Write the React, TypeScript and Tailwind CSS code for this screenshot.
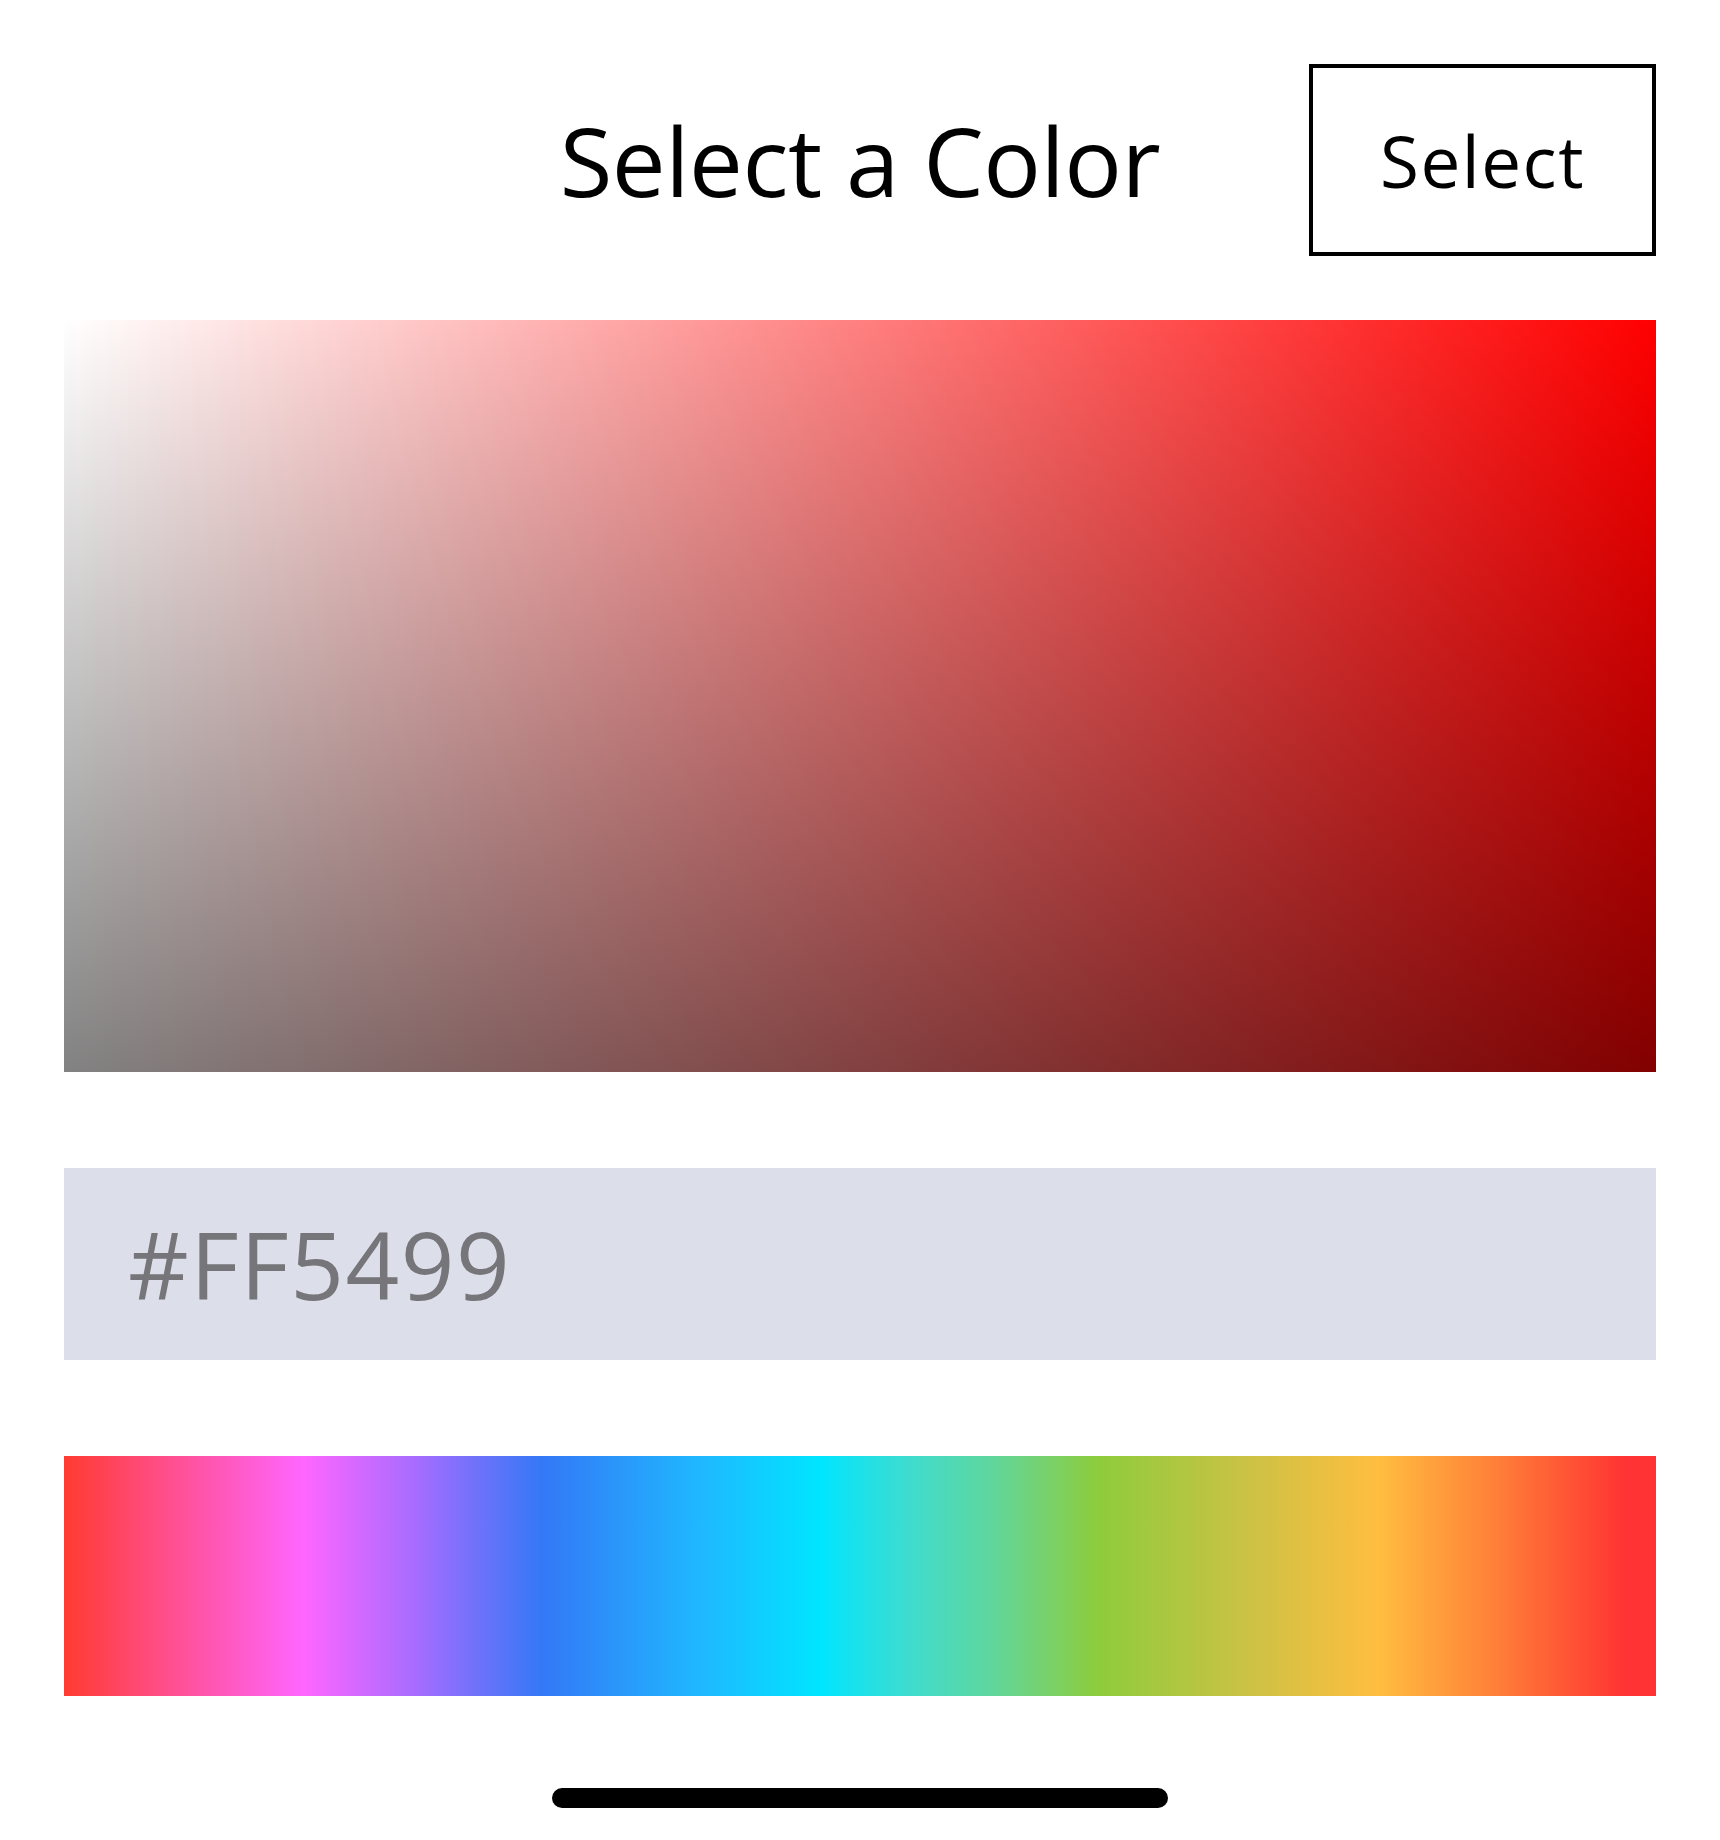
import React from "react";

export default function App() {
  return (
    <div
      className="w-[1720px] h-[1840px] bg-white flex flex-col px-16 pt-16"
      style={{ fontFamily: '"Open Sans", "Noto Sans", sans-serif' }}
    >
      <div className="grid grid-cols-[1fr_auto_1fr] items-center h-[192px]">
        <div />
        <h1 className="text-[96px] leading-none font-medium text-black tracking-[-0.5px]">
          Select a Color
        </h1>
        <div className="flex justify-end">
          <button className="w-[347px] h-[192px] border-4 border-black bg-white text-[71px] leading-none text-black tracking-[1.5px] flex items-center justify-center">
            Select
          </button>
        </div>
      </div>

      <div className="mt-16 h-[752px] relative bg-[#ff0000]">
        <div className="absolute inset-0 bg-linear-to-r from-white to-transparent" />
        <div className="absolute inset-0 bg-linear-to-b from-transparent to-[rgba(0,0,0,0.49)]" />
      </div>

      <div className="mt-24 h-[192px] bg-[#dcdee9] flex items-center pl-[64px]">
        <span className="text-[94px] leading-none text-[#75757a] tracking-[1.5px]">#FF5499</span>
      </div>

      <div className="mt-24 h-[240px] bg-[linear-gradient(to_right,#ff3b30_0%,#ff4a78_5%,#ff66ff_15%,#a86cff_22%,#3478f6_30%,#1fb8ff_40%,#00e5ff_47.5%,#3edccf_53%,#5ed7a0_58%,#8ecc3c_65%,#c9c244_74%,#ffbe40_82.5%,#ff7f38_90%,#ff3333_98%,#ff3333_100%)]" />

      <div className="mt-[92px] self-center w-[616px] h-5 rounded-full bg-black" />
    </div>
  );
}
